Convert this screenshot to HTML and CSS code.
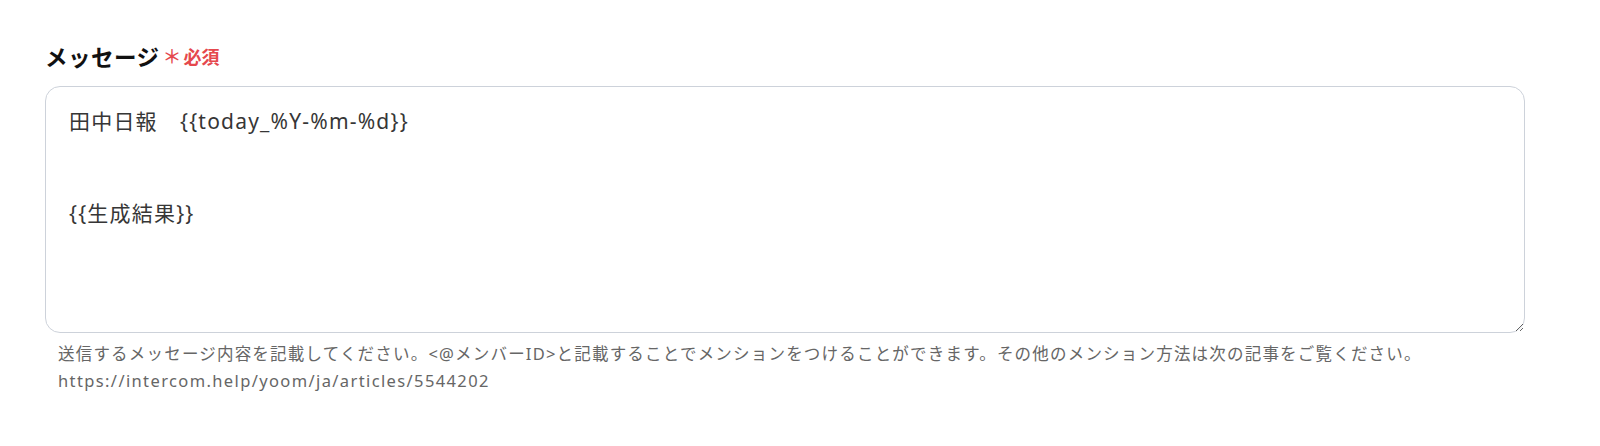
FILE: index.html
```html
<!DOCTYPE html>
<html lang="ja">
  <head>
    <meta charset="UTF-8" />
    <meta name="viewport" content="width=device-width, initial-scale=1.0" />
    <title>メッセージ</title>
    <link rel="stylesheet" href="styles.css">
  </head>

  <body>
    <div class="field">
      <label class="field-label" for="message">
        メッセージ<span class="required"><span class="mark">＊</span>必須</span>
      </label>
      <textarea id="message" class="field-input">田中日報　{{today_%Y-%m-%d}}


{{生成結果}}</textarea>
      <p class="field-help">
        送信するメッセージ内容を記載してください。&lt;@メンバーID&gt;と記載することでメンションをつけることができます。その他のメンション方法は次の記事をご覧ください。<br />
        <span class="field-link">https://intercom.help/yoom/ja/articles/5544202</span>
      </p>
    </div>
  </body>
</html>
```

FILE: styles.css
```css
body {
  margin: 0;
  background-color: #fff;
  font-family: "Noto Sans", "Noto Sans CJK JP", sans-serif;
}

.field {
  width: 1480px;
  padding: 41px 75px 0 45px;
}

.field-label {
  display: flex;
  align-items: center;
  height: 30px;
  margin-bottom: 15px;
  font-size: 22.5px;
  letter-spacing: 0.5px;
  font-weight: 700;
  color: #111;
}

.required {
  display: inline-flex;
  align-items: center;
  margin-left: 3px;
  font-size: 18px;
  letter-spacing: 0;
  color: #e5484d;
}

.required .mark {
  font-size: 19px;
  font-weight: 500;
  margin-right: 2px;
}

.field-input {
  display: block;
  box-sizing: border-box;
  width: 1480px;
  height: 247px;
  margin: 0;
  padding: 19px 23px;
  border: 1px solid #cdd2da;
  border-radius: 15px;
  font-family: "Noto Sans", "Noto Sans CJK JP", sans-serif;
  font-size: 21px;
  letter-spacing: 1.2px;
  line-height: 30.6px;
  color: #363636;
  outline: none;
}

.field-help {
  margin: 7px 0 0;
  padding-left: 13px;
  font-size: 16.5px;
  letter-spacing: 1.2px;
  line-height: 27px;
  color: #666;
}

.field-link {
  letter-spacing: 1.38px;
}
```
